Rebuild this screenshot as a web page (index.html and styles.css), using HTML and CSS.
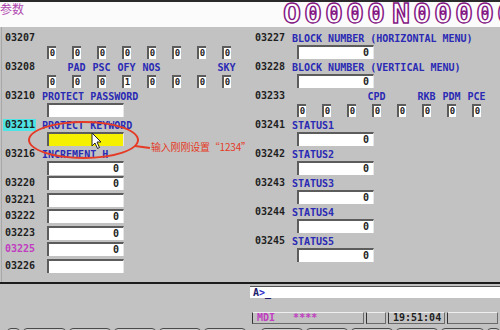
FILE: index.html
```html
<!DOCTYPE html>
<html lang="zh-CN">
<head>
    <meta charset="UTF-8">
    <title>参数</title>
    <link rel="stylesheet" href="styles.css">
</head>
<body>
<div class="screen">
    <div class="top">
        <span class="title">参数</span>
        <span class="prog">O0000 N00000</span>
    </div>

    <div class="main">
        <div class="col">
            <div class="param">
                <div class="line"><span class="num">03207</span></div>
                <div class="bits">
                    <span class="cell"><span class="bit">0</span></span>
                    <span class="cell"><span class="bit">0</span></span>
                    <span class="cell"><span class="bit">0</span></span>
                    <span class="cell"><span class="bit">0</span></span>
                    <span class="cell"><span class="bit">0</span></span>
                    <span class="cell"><span class="bit">0</span></span>
                    <span class="cell"><span class="bit">0</span></span>
                    <span class="cell"><span class="bit">0</span></span>
                </div>
            </div>
            <div class="param">
                <div class="line">
                    <span class="num">03208</span>
                    <span class="names">
                        <span class="cell"></span>
                        <span class="cell">PAD</span>
                        <span class="cell">PSC</span>
                        <span class="cell">OFY</span>
                        <span class="cell">NOS</span>
                        <span class="cell"></span>
                        <span class="cell"></span>
                        <span class="cell">SKY</span>
                    </span>
                </div>
                <div class="bits">
                    <span class="cell"><span class="bit">0</span></span>
                    <span class="cell"><span class="bit">0</span></span>
                    <span class="cell"><span class="bit">0</span></span>
                    <span class="cell"><span class="bit">1</span></span>
                    <span class="cell"><span class="bit">0</span></span>
                    <span class="cell"><span class="bit">0</span></span>
                    <span class="cell"><span class="bit">0</span></span>
                    <span class="cell"><span class="bit">0</span></span>
                </div>
            </div>
            <div class="param">
                <div class="line"><span class="num">03210</span><span class="name">PROTECT PASSWORD</span></div>
                <div class="vals"><span class="box"></span></div>
            </div>
            <div class="param">
                <div class="line"><span class="num sel">03211</span><span class="name">PROTECT KEYWORD</span></div>
                <div class="vals"><span class="box edit"></span></div>
            </div>
            <div class="param">
                <div class="line"><span class="num">03216</span><span class="name">INCREMENT H</span></div>
                <div class="vals"><span class="box">0</span></div>
            </div>
            <div class="single"><span class="num">03220</span><span class="box">0</span></div>
            <div class="single"><span class="num">03221</span><span class="box"></span></div>
            <div class="single"><span class="num">03222</span><span class="box">0</span></div>
            <div class="single"><span class="num">03223</span><span class="box">0</span></div>
            <div class="single"><span class="num pink">03225</span><span class="box">0</span></div>
            <div class="single"><span class="num">03226</span><span class="box"></span></div>
        </div>

        <div class="col">
            <div class="param">
                <div class="line"><span class="num">03227</span><span class="name">BLOCK NUMBER (HORIZONTAL MENU)</span></div>
                <div class="vals"><span class="box">0</span></div>
            </div>
            <div class="param">
                <div class="line"><span class="num">03228</span><span class="name">BLOCK NUMBER (VERTICAL MENU)</span></div>
                <div class="vals"><span class="box">0</span></div>
            </div>
            <div class="param">
                <div class="line">
                    <span class="num">03233</span>
                    <span class="names">
                        <span class="cell"></span>
                        <span class="cell"></span>
                        <span class="cell"></span>
                        <span class="cell">CPD</span>
                        <span class="cell"></span>
                        <span class="cell">RKB</span>
                        <span class="cell">PDM</span>
                        <span class="cell">PCE</span>
                    </span>
                </div>
                <div class="bits">
                    <span class="cell"><span class="bit">0</span></span>
                    <span class="cell"><span class="bit">0</span></span>
                    <span class="cell"><span class="bit">0</span></span>
                    <span class="cell"><span class="bit">0</span></span>
                    <span class="cell"><span class="bit">0</span></span>
                    <span class="cell"><span class="bit">0</span></span>
                    <span class="cell"><span class="bit">0</span></span>
                    <span class="cell"><span class="bit">0</span></span>
                </div>
            </div>
            <div class="param">
                <div class="line"><span class="num">03241</span><span class="name">STATUS1</span></div>
                <div class="vals"><span class="box">0</span></div>
            </div>
            <div class="param">
                <div class="line"><span class="num">03242</span><span class="name">STATUS2</span></div>
                <div class="vals"><span class="box">0</span></div>
            </div>
            <div class="param">
                <div class="line"><span class="num">03243</span><span class="name">STATUS3</span></div>
                <div class="vals"><span class="box">0</span></div>
            </div>
            <div class="param">
                <div class="line"><span class="num">03244</span><span class="name">STATUS4</span></div>
                <div class="vals"><span class="box">0</span></div>
            </div>
            <div class="param">
                <div class="line"><span class="num">03245</span><span class="name">STATUS5</span></div>
                <div class="vals"><span class="box">0</span></div>
            </div>
        </div>
    </div>

    <div class="bottom">
        <div class="cmd">A<span class="prompt">&gt;</span>_</div>
        <div class="status">
            <span class="stat mode">MDI&nbsp;&nbsp;&nbsp;****</span>
            <span class="stat blank"></span>
            <span class="stat clock">19:51:04</span>
            <span class="stat wide"></span>
        </div>
        <div class="keys">
            <span class="key arrow"></span>
            <span class="key"></span><span class="key"></span><span class="key"></span><span class="key"></span><span class="key"></span>
            <span class="key gap"></span><span class="key"></span><span class="key"></span><span class="key"></span><span class="key"></span>
            <span class="key arrow"></span>
        </div>
    </div>

    <!-- annotation drawn over the screen -->
    <div class="ring"></div>
    <div class="lead"></div>
    <div class="note">输入刚刚设置“1234”</div>
    <svg class="pointer" width="12" height="18" viewBox="0 0 12 18">
        <path d="M1 1 L1 14 L4 11 L6.5 16.5 L8.5 15.5 L6 10 L10 10 Z" fill="#fff" stroke="#222" stroke-width="1"/>
    </svg>
</div>
</body>
</html>
```

FILE: styles.css
```css
:root {
    --screen: #c2c2c2;
    --ink: #1e1e1e;
    --blue: #2a2ab4;
    --pink: #c03cc0;
    --purple: #851785;
    --sunk: #5c5c5c;
    --mark: #e53a26;
}
html, body {
    margin: 0; padding: 0;
    width: 500px; height: 330px;
    overflow: hidden;
    background: var(--screen);
}
.screen {
    position: relative;
    width: 500px; height: 330px;
    font-family: "DejaVu Sans Mono", "Liberation Mono", monospace;
    font-size: 10px; font-weight: bold;
    color: var(--ink);
}
.top {
    display: flex; align-items: flex-start;
    height: 25px;
    background: #fbfbfb;
    border-top: 2px solid #2a2a2a;
    overflow: hidden;
}
.title {
    width: 283px;
    font-family: "Noto Sans CJK SC", sans-serif;
    font-weight: normal; font-size: 12px;
    line-height: 13px;
    color: #b048b0;
}
.prog {
    display: inline-block;
    white-space: nowrap;
    font-size: 26px; line-height: 25px;
    letter-spacing: 2.6px;
    word-spacing: -14.8px;
    color: #fff;
    -webkit-text-stroke: 1.3px var(--purple);
    transform: scaleX(1.15);
    transform-origin: left center;
}
.main {
    display: grid;
    grid-template-columns: 250px 250px;
    height: 251px;
    padding-top: 4px;
    border-left: 1px solid #a8a8a8;
    margin-left: 1px;
    box-sizing: content-box;
}
.col { margin-left: -2px; }
.col + .col { margin-left: -2px; }
.param { height: 29px; }
.line, .bits, .vals, .single {
    display: flex; align-items: center;
    height: 14px;
}
.single { margin-bottom: 2.6px; }
.num {
    box-sizing: border-box;
    width: 33px; margin-left: 3px; padding-left: 2px;
    line-height: 12px;
}
.num.sel { background: #4fe3e3; }
.num.pink { color: var(--pink); }
.name { margin-left: 6px; color: var(--blue); white-space: nowrap; }
.names { display: flex; margin-left: 3px; color: var(--blue); }
.bits { padding-left: 39px; }
.vals { padding-left: 47px; }
.single .box { margin-left: 11px; }
.cell {
    width: 25px;
    display: flex; justify-content: center;
}
.bit {
    width: 7px; height: 11px;
    background: #fff;
    border-top: 2px solid var(--sunk);
    border-left: 2px solid var(--sunk);
    line-height: 11px;
    text-align: center;
    font-size: 9px;
}
.box {
    box-sizing: border-box;
    width: 77px; height: 14px;
    background: #fff;
    border-top: 2px solid var(--sunk);
    border-left: 2px solid var(--sunk);
    border-right: 1px solid #e6e6e6;
    text-align: right;
    padding-right: 4px;
    line-height: 12px;
}
.box.edit { background: #f4f000; }
.bottom {
    border-top: 2px solid #1c1c1c;
}
.cmd {
    margin: 2px 0 0 250px;
    height: 11px;
    background: #fff;
    border-top: 1px solid #555;
    padding-left: 3px;
    line-height: 11px;
    color: #20206a;
}
.prompt { color: #3434c8; }
.status {
    display: flex; gap: 2px;
    margin: 14px 0 0 252px;
    height: 12px;
}
.stat {
    box-sizing: border-box;
    height: 12px;
    border: 1px solid #6a6a6a;
    border-top-color: #eee;
    border-left-color: #333;
    line-height: 10px;
    padding-left: 4px;
}
.mode { width: 112px; color: var(--pink); }
.blank { width: 20px; }
.clock { width: 57px; }
.wide { width: 51px; }
.keys {
    display: flex; gap: 3px;
    margin-top: 4px;
    padding-left: 7px;
}
.key {
    width: 42px; height: 8px;
    border: 1px solid #4a4a4a;
    border-radius: 4px 4px 0 0;
    background: #cfcfcf;
}
.key.arrow { width: 12px; }
.key.gap { width: 42px; margin-left: 12px; }
.ring {
    position: absolute;
    left: 28px; top: 121px;
    width: 107px; height: 34px;
    border: 2px solid var(--mark);
    border-radius: 50%;
}
.lead {
    position: absolute;
    left: 135px; top: 146px;
    width: 15px; height: 2px;
    background: var(--mark);
    transform: rotate(8deg);
}
.note {
    position: absolute;
    left: 151px; top: 140px;
    font-family: "Noto Sans CJK SC", sans-serif;
    font-weight: normal; font-size: 10px;
    letter-spacing: -0.2px;
    line-height: 14px;
    color: var(--mark);
}
.pointer {
    position: absolute;
    left: 91px; top: 132px;
}
```
